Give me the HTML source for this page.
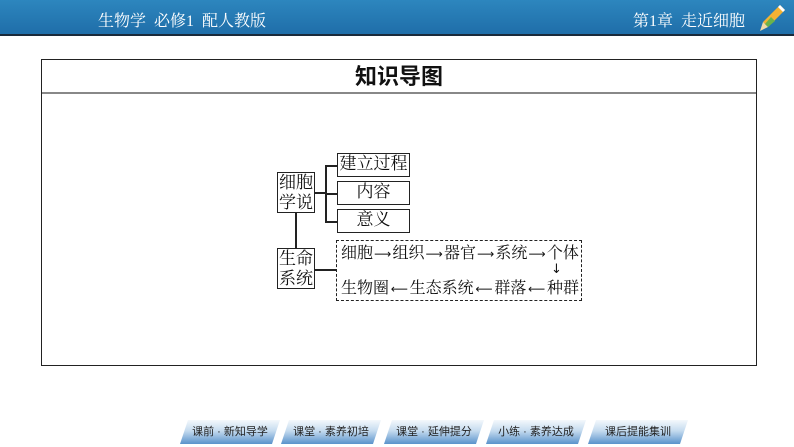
<!DOCTYPE html>
<html><head><meta charset="utf-8"><style>
*{margin:0;padding:0;box-sizing:border-box}
body{width:794px;height:447px;background:#fff;position:relative;overflow:hidden;font-family:"Liberation Serif","Noto Serif CJK SC",serif}
.hdr{position:absolute;left:0;top:0;width:794px;height:36px;background:linear-gradient(180deg,#2d86be 0%,#1f6ea9 100%);border-bottom:2px solid #1a2a3a}
.hdr span{position:absolute;color:#fff;font-size:16px;top:8px;font-family:"Liberation Serif","Noto Serif CJK SC",serif}
.box{position:absolute;left:41px;top:59px;width:716px;height:307px;border:1px solid #222}
.ttl{position:absolute;left:0;top:0;width:714px;height:34px;border-bottom:2px solid #888;text-align:center;font:bold 22px "Liberation Sans","Noto Sans CJK SC",sans-serif;line-height:34px;color:#111}
.b{position:absolute;border:1.5px solid #222;font-size:17px;line-height:20px;text-align:center;color:#111}
.l{position:absolute;background:#222}
.row{position:absolute;left:4px;width:238px;display:flex;justify-content:space-between;align-items:center;font-size:16px;line-height:18px;white-space:nowrap}
.a{font-family:"DejaVu Sans",sans-serif;font-size:12px}
.btn{position:absolute;top:420px;height:24px;width:100px;clip-path:polygon(8px 0,100% 0,calc(100% - 8px) 100%,0 100%);background:linear-gradient(180deg,#f4f8fc 0%,#c5dbef 45%,#5a93cb 100%);font:11px "Liberation Sans","Noto Sans CJK SC",sans-serif;color:#222;text-align:center;line-height:24px}
</style></head><body>
<div class="hdr">
<span style="left:98px">生物学&nbsp;&nbsp;必修1&nbsp;&nbsp;配人教版</span>
<span style="left:633px">第1章&nbsp;&nbsp;走近细胞</span>
<svg style="position:absolute;left:758px;top:3px" width="28" height="30" viewBox="0 0 28 30">
<polygon points="22,2 27,7 10,24 5,19" fill="#f2b233"/>
<polygon points="22,2 27,7 25,9 20,4" fill="#fff"/>
<polygon points="5,19 10,24 2,28" fill="#f0d9a8"/>
<polygon points="13,14 17,18 10,24 7,21" fill="#6bb34a"/>
</svg>
</div>
<div class="box"><div class="ttl">知识导图</div></div>
<div class="b" style="left:277px;top:172px;width:38px;height:41px">细胞<br>学说</div>
<div class="b" style="left:337px;top:153px;width:73px;height:24px">建立过程</div>
<div class="b" style="left:337px;top:181px;width:73px;height:24px">内容</div>
<div class="b" style="left:337px;top:209px;width:73px;height:24px">意义</div>
<div class="l" style="left:315px;top:192px;width:10px;height:1.5px"></div>
<div class="l" style="left:325px;top:165px;width:1.5px;height:56px"></div>
<div class="l" style="left:325px;top:165px;width:12px;height:1.5px"></div>
<div class="l" style="left:325px;top:193px;width:12px;height:1.5px"></div>
<div class="l" style="left:325px;top:221px;width:12px;height:1.5px"></div>
<div class="l" style="left:295px;top:213px;width:1.5px;height:35px"></div>
<div class="b" style="left:277px;top:248px;width:38px;height:41px">生命<br>系统</div>
<div class="l" style="left:315px;top:269px;width:21px;height:1.5px"></div>
<div style="position:absolute;left:336px;top:240px;width:246px;height:61px;border:1.5px dashed #222;color:#111">
<div class="row" style="top:4px"><span>细胞</span><span class="a">⟶</span><span>组织</span><span class="a">⟶</span><span>器官</span><span class="a">⟶</span><span>系统</span><span class="a">⟶</span><span>个体</span></div>
<div style="position:absolute;left:214px;top:22px;font-family:'DejaVu Sans',sans-serif;font-size:13px;line-height:14px">↓</div>
<div class="row" style="top:39px"><span>生物圈</span><span class="a">⟵</span><span>生态系统</span><span class="a">⟵</span><span>群落</span><span class="a">⟵</span><span>种群</span></div>
</div>
<div class="btn" style="left:180px">课前 · 新知导学</div>
<div class="btn" style="left:281px">课堂 · 素养初培</div>
<div class="btn" style="left:384px">课堂 · 延伸提分</div>
<div class="btn" style="left:486px">小练 · 素养达成</div>
<div class="btn" style="left:588px">课后提能集训</div>
</body></html>
